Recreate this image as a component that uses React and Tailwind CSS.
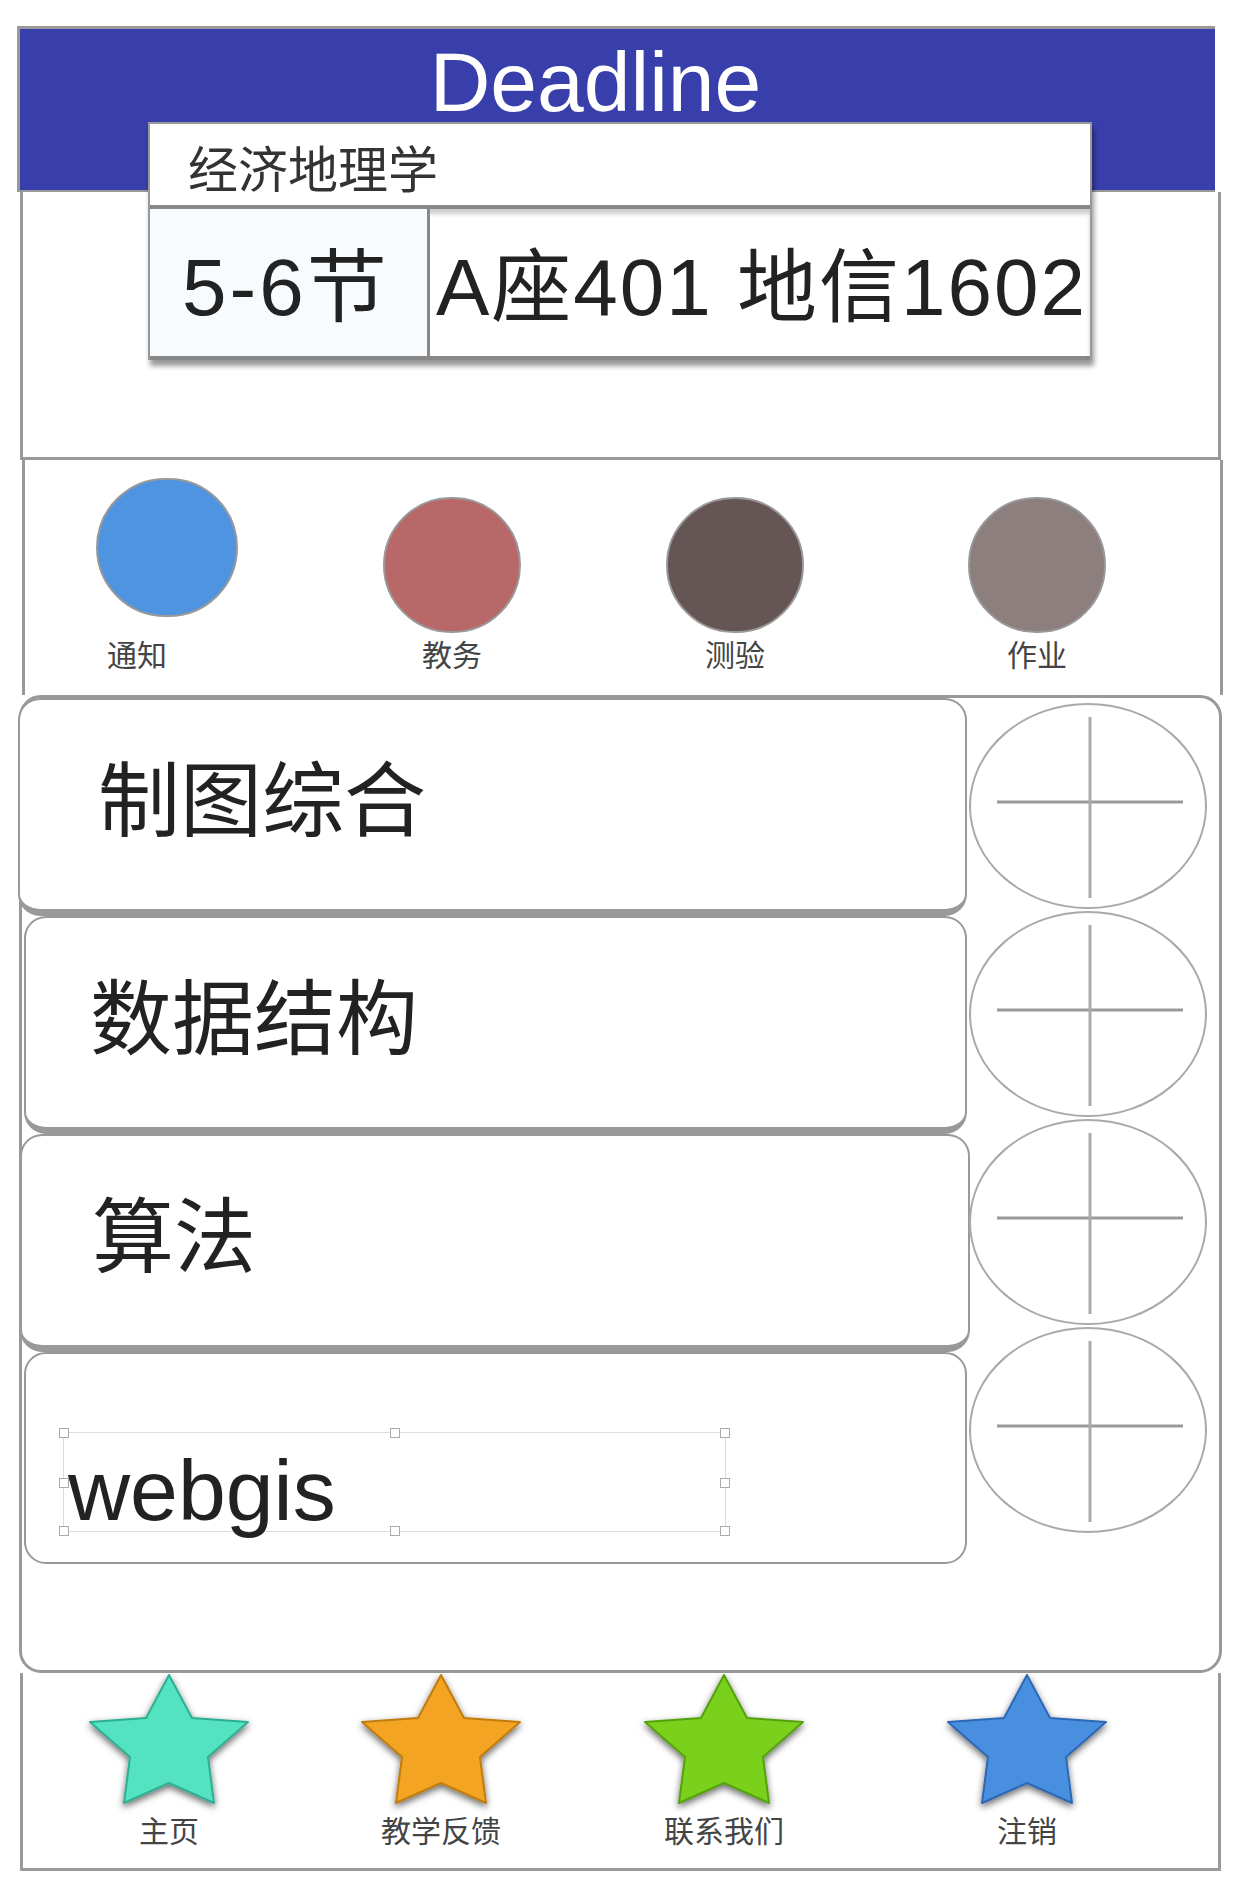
const tabs = [
  { label: "通知", color: "bg-[#4f94e0]", ml: "ml-[52px]", top: "mt-[18px]", size: "h-[139px] w-[142px]", gap: "mt-[24px]", shift: "mr-[60px]" },
  { label: "教务", color: "bg-[#b86868]", ml: "ml-[105px]", top: "mt-[37px]", size: "h-[136px] w-[138px]", gap: "mt-[8px]", shift: "" },
  { label: "测验", color: "bg-[#655555]", ml: "ml-[103px]", top: "mt-[37px]", size: "h-[136px] w-[138px]", gap: "mt-[8px]", shift: "" },
  { label: "作业", color: "bg-[#8e7f7f]", ml: "ml-[122px]", top: "mt-[37px]", size: "h-[136px] w-[138px]", gap: "mt-[8px]", shift: "" },
];

const courses = [
  { name: "制图综合", box: "ml-[-4px] w-[949px] border-b-[7px]", pad: "pl-[78px]" },
  { name: "数据结构", box: "ml-[2px] w-[943px] border-b-[7px]", pad: "pl-[64px]" },
  { name: "算法", box: "ml-[-2px] w-[950px] border-b-[7px]", pad: "pl-[70px]" },
];

const navs = [
  { id: "s1", label: "主页", fill: "#52e3c0", edge: "#2fae92", ml: "ml-[61px]" },
  { id: "s2", label: "教学反馈", fill: "#f2a423", edge: "#c07c10", ml: "ml-[102px]" },
  { id: "s3", label: "联系我们", fill: "#7ad11f", edge: "#55a010", ml: "ml-[113px]" },
  { id: "s4", label: "注销", fill: "#4a8fe0", edge: "#2d68b5", ml: "ml-[133px]" },
];

function AddButton() {
  return (
    <svg width="240" height="208" viewBox="0 0 240 208" className="block">
      <ellipse cx="120" cy="104" rx="118" ry="102" fill="white" stroke="#aaa" strokeWidth="2" />
      <line x1="29" y1="100" x2="215" y2="100" stroke="#999" strokeWidth="3" />
      <line x1="122" y1="15" x2="122" y2="196" stroke="#aaa" strokeWidth="3" />
    </svg>
  );
}

function Star({ id, fill, edge }) {
  return (
    <svg width="170" height="142" viewBox="-6 -2 170 142" className="block overflow-visible">
      <defs>
        <filter id={id} x="-20%" y="-20%" width="140%" height="140%">
          <feDropShadow dx="0" dy="3" stdDeviation="3.5" floodColor="#000" floodOpacity="0.6" />
        </filter>
      </defs>
      <polygon
        points="79,0 102,43 158,47 118,82 124,128 79,108 34,128 40,82 0,47 56,43"
        fill={fill}
        stroke={edge}
        strokeWidth="2"
        strokeLinejoin="round"
        filter={`url(#${id})`}
      />
    </svg>
  );
}

function Handle({ className }) {
  return <span className={`absolute h-[10px] w-[10px] border border-[#aaa] bg-white ${className}`} />;
}

export default function App() {
  return (
    <div className="min-h-[1884px] w-[1234px] bg-white pt-[26px] font-['Liberation_Sans','Noto_Sans_CJK_SC',sans-serif] text-[#222]">
      {/* header */}
      <div className="ml-[17px] flex h-[166px] w-[1198px] justify-center border-t-[3px] border-b-2 border-l-[3px] border-[#999] bg-[#383fab] pr-[44px]">
        <h1 className="mt-[11px] text-[84px] leading-none font-normal text-white">Deadline</h1>
      </div>
      <div className="ml-[20px] flex h-[268px] w-[1201px] flex-col items-start border-x-[3px] border-b-[3px] border-[#999]">
        <div className="relative -mt-[70px] ml-[125px] w-[944px] border-x-2 border-t-2 border-[#999] bg-white shadow-[2px_6px_5px_rgba(0,0,0,0.4)]">
          <div className="flex h-[81px] items-center pt-[12px] pl-[38px] text-[50px] leading-none text-[#333]">经济地理学</div>
          <div className="flex h-[155px] border-y-[4px] border-[#888] shadow-[inset_0_5px_4px_rgba(0,0,0,0.2)]">
            <div className="flex w-[280px] items-center border-r-[3px] border-[#888] bg-[#f7fbfd] pt-[10px] pl-[32px] text-[80px] leading-none tracking-[3px]">
              5-6节
            </div>
            <div className="flex flex-1 items-center pt-[10px] pl-[6px] text-[80px] leading-none tracking-[2px] whitespace-nowrap">
              A座401 地信1602
            </div>
          </div>
        </div>
      </div>

      {/* categories */}
      <div className="ml-[22px] flex h-[235px] w-[1201px] border-x-[3px] border-[#999]">
        {tabs.map((t) => (
          <div key={t.label} className={`flex w-[180px] flex-col items-center ${t.ml}`}>
            <div className={`rounded-full border-2 border-[#999] ${t.color} ${t.size} ${t.top}`} />
            <span className={`text-[30px] leading-none text-[#444] ${t.gap} ${t.shift}`}>{t.label}</span>
          </div>
        ))}
      </div>

      {/* course list */}
      <div className="ml-[19px] flex h-[978px] w-[1203px] rounded-[22px] border-[3px] border-[#999]">
        <div className="flex w-[946px] flex-col">
          {courses.map((c) => (
            <div
              key={c.name}
              className={`flex h-[218px] items-center rounded-[22px] border-2 border-[#999] bg-white pb-[6px] text-[82px] leading-none ${c.box} ${c.pad}`}
            >
              {c.name}
            </div>
          ))}
          <div className="ml-[2px] h-[212px] w-[943px] rounded-[22px] border-2 border-[#999] bg-white pt-[78px] pl-[37px]">
            <div className="relative h-[100px] w-[663px] border border-[#ddd]">
              <Handle className="-top-[5px] -left-[5px]" />
              <Handle className="-top-[5px] left-[326px]" />
              <Handle className="-top-[5px] -right-[5px]" />
              <Handle className="top-[45px] -left-[5px]" />
              <Handle className="top-[45px] -right-[5px]" />
              <Handle className="-bottom-[5px] -left-[5px]" />
              <Handle className="-bottom-[5px] left-[326px]" />
              <Handle className="-bottom-[5px] -right-[5px]" />
              <div className="mt-[14px] pl-[4px] text-[86px] leading-none">webgis</div>
            </div>
          </div>
        </div>
        <div className="flex w-[240px] flex-col pt-[4px]">
          <AddButton />
          <AddButton />
          <AddButton />
          <AddButton />
        </div>
      </div>

      {/* bottom nav */}
      <div className="ml-[20px] flex h-[198px] w-[1201px] border-x-[3px] border-b-[3px] border-[#999]">
        {navs.map((n) => (
          <div key={n.id} className={`flex w-[170px] flex-col items-center ${n.ml}`}>
            <Star id={n.id} fill={n.fill} edge={n.edge} />
            <span className="mt-[2px] text-[30px] leading-none text-[#444]">{n.label}</span>
          </div>
        ))}
      </div>
    </div>
  );
}
